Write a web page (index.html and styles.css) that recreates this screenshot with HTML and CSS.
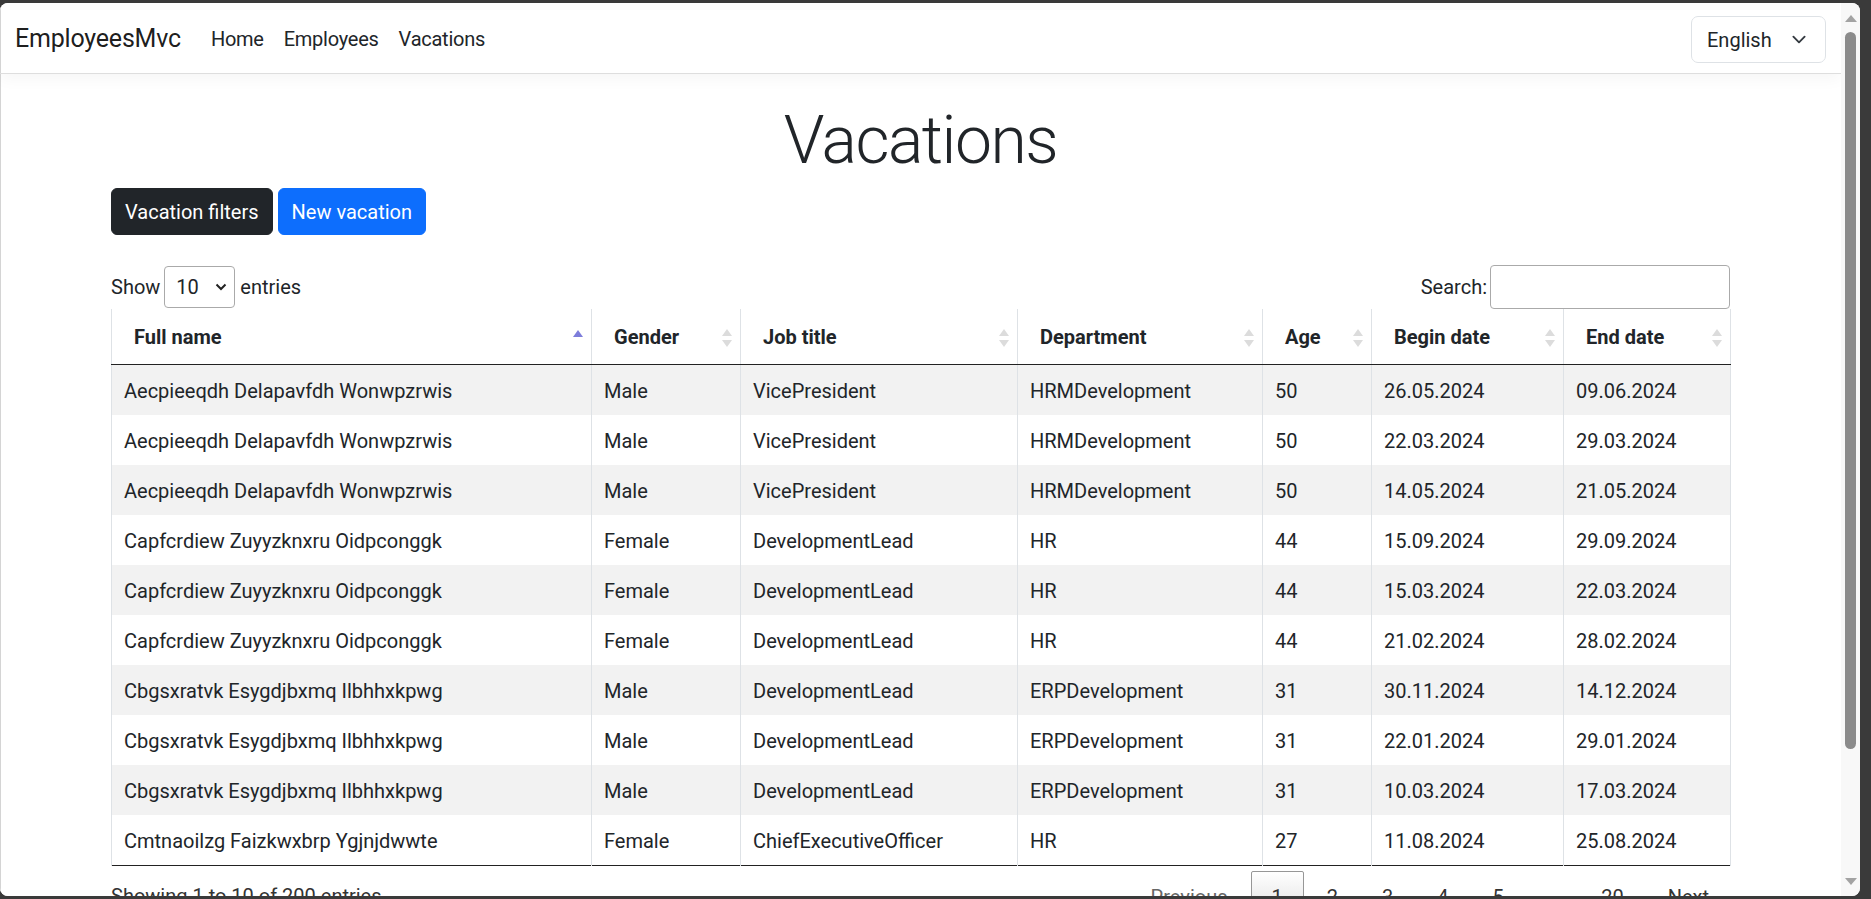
FILE: index.html
```html
<!DOCTYPE html>
<html lang="en">
<head>
<meta charset="utf-8">
<title>Vacations - EmployeesMvc</title>
<link rel="stylesheet" href="styles.css">
</head>
<body>
<div class="window">
  <div class="viewport">
    <header class="navbar">
      <div class="nav-left">
        <a class="brand" href="#">EmployeesMvc</a>
        <nav class="nav-links">
          <a class="nav-link" href="#">Home</a>
          <a class="nav-link" href="#">Employees</a>
          <a class="nav-link" href="#">Vacations</a>
        </nav>
      </div>
      <div class="lang-select">
        <span>English</span>
        <svg class="chev" width="20" height="15" viewBox="0 0 16 16"><path d="M2 5l6 6 6-6" fill="none" stroke="#343a40" stroke-width="2" stroke-linecap="round" stroke-linejoin="round"/></svg>
      </div>
    </header>

    <main class="container">
      <h1 class="title">Vacations</h1>
      <div class="actions">
        <button class="btn btn-dark">Vacation filters</button>
        <button class="btn btn-primary">New vacation</button>
      </div>

      <div class="dt-controls">
        <div class="dt-length">
          <span>Show</span>
          <div class="dt-select">
            <span>10</span>
            <svg width="12" height="8" viewBox="0 0 12 8"><path d="M1.5 1.5l4.5 4.5 4.5-4.5" fill="none" stroke="#222" stroke-width="2"/></svg>
          </div>
          <span>entries</span>
        </div>
        <div class="dt-search">
          <span>Search:</span>
          <div class="dt-input"></div>
        </div>
      </div>

      <table class="dt-table">
        <colgroup>
          <col class="w1"><col class="w2"><col class="w3"><col class="w4"><col class="w5"><col class="w6"><col class="w7">
        </colgroup>
        <thead>
          <tr>
            <th class="sort asc">Full name</th>
            <th class="sort">Gender</th>
            <th class="sort">Job title</th>
            <th class="sort">Department</th>
            <th class="sort">Age</th>
            <th class="sort">Begin date</th>
            <th class="sort">End date</th>
          </tr>
        </thead>
        <tbody>
          <tr><td>Aecpieeqdh Delapavfdh Wonwpzrwis</td><td>Male</td><td>VicePresident</td><td>HRMDevelopment</td><td>50</td><td>26.05.2024</td><td>09.06.2024</td></tr>
          <tr><td>Aecpieeqdh Delapavfdh Wonwpzrwis</td><td>Male</td><td>VicePresident</td><td>HRMDevelopment</td><td>50</td><td>22.03.2024</td><td>29.03.2024</td></tr>
          <tr><td>Aecpieeqdh Delapavfdh Wonwpzrwis</td><td>Male</td><td>VicePresident</td><td>HRMDevelopment</td><td>50</td><td>14.05.2024</td><td>21.05.2024</td></tr>
          <tr><td>Capfcrdiew Zuyyzknxru Oidpconggk</td><td>Female</td><td>DevelopmentLead</td><td>HR</td><td>44</td><td>15.09.2024</td><td>29.09.2024</td></tr>
          <tr><td>Capfcrdiew Zuyyzknxru Oidpconggk</td><td>Female</td><td>DevelopmentLead</td><td>HR</td><td>44</td><td>15.03.2024</td><td>22.03.2024</td></tr>
          <tr><td>Capfcrdiew Zuyyzknxru Oidpconggk</td><td>Female</td><td>DevelopmentLead</td><td>HR</td><td>44</td><td>21.02.2024</td><td>28.02.2024</td></tr>
          <tr><td>Cbgsxratvk Esygdjbxmq Ilbhhxkpwg</td><td>Male</td><td>DevelopmentLead</td><td>ERPDevelopment</td><td>31</td><td>30.11.2024</td><td>14.12.2024</td></tr>
          <tr><td>Cbgsxratvk Esygdjbxmq Ilbhhxkpwg</td><td>Male</td><td>DevelopmentLead</td><td>ERPDevelopment</td><td>31</td><td>22.01.2024</td><td>29.01.2024</td></tr>
          <tr><td>Cbgsxratvk Esygdjbxmq Ilbhhxkpwg</td><td>Male</td><td>DevelopmentLead</td><td>ERPDevelopment</td><td>31</td><td>10.03.2024</td><td>17.03.2024</td></tr>
          <tr><td>Cmtnaoilzg Faizkwxbrp Ygjnjdwwte</td><td>Female</td><td>ChiefExecutiveOfficer</td><td>HR</td><td>27</td><td>11.08.2024</td><td>25.08.2024</td></tr>
        </tbody>
      </table>

      <div class="dt-footer">
        <div class="dt-info">Showing 1 to 10 of 200 entries</div>
        <div class="dt-paging">
          <a class="pg disabled">Previous</a>
          <a class="pg current">1</a>
          <a class="pg">2</a>
          <a class="pg">3</a>
          <a class="pg">4</a>
          <a class="pg">5</a>
          <span class="ellipsis">…</span>
          <a class="pg">20</a>
          <a class="pg">Next</a>
        </div>
      </div>
    </main>
  </div>
  <div class="scrollbar">
    <div class="sb-up"></div>
    <div class="sb-thumb"></div>
    <div class="sb-space"></div>
    <div class="sb-down"></div>
  </div>
</div>
</body>
</html>
```

FILE: styles.css
```css
* { box-sizing: border-box; }

html, body {
  margin: 0;
  height: 899px;
  overflow: hidden;
}

body {
  background: #3a3a3a;
  padding-top: 3px;
  font-family: "Segoe UI", Roboto, "Liberation Sans", sans-serif;
  font-size: 20px;
  line-height: 1.5;
  color: #212529;
}

.window {
  width: 1860px;
  height: 893px;
  background: #fff;
  border-radius: 8px;
  overflow: hidden;
  display: flex;
}

.viewport {
  flex: 1;
  overflow: hidden;
  background: #fff;
  box-shadow: inset 1px 0 0 #d4d4d4;
}

/* Navbar */
.navbar {
  height: 71px;
  display: flex;
  align-items: center;
  justify-content: space-between;
  padding: 0 15px 0 15px;
  border-bottom: 1px solid #dedede;
  box-shadow: 0 5px 15px rgba(0,0,0,.04);
}

.nav-left {
  display: flex;
  align-items: center;
  padding-top: 2px;
}

.brand {
  font-size: 25px;
  letter-spacing: -0.2px;
  color: rgba(0,0,0,.9);
  text-decoration: none;
  margin-right: 20px;
}

.nav-links {
  display: flex;
}

.nav-link {
  color: #212529;
  text-decoration: none;
  padding: 10px 10px;
  letter-spacing: -0.25px;
}

.lang-select {
  width: 135px;
  height: 47px;
  border: 1px solid #dee2e6;
  border-radius: 7px;
  display: flex;
  align-items: center;
  justify-content: space-between;
  padding: 0 16px 0 15px;
  margin-top: 3px;
}

/* Main */
.container {
  width: 1619px;
  margin: 0 auto;
  padding-top: 20px;
}

.title {
  margin: 0;
  text-align: center;
  font-size: 66px;
  font-weight: 300;
  letter-spacing: -1.5px;
  line-height: 94px;
}

.actions {
  display: flex;
  gap: 5px;
  height: 47px;
}

.btn {
  font-family: inherit;
  font-size: 20px;
  line-height: 30px;
  padding: 7px 13px;
  border: 1px solid transparent;
  border-radius: 6px;
  color: #fff;
}

.btn-dark { background: #212529; border-color: #212529; }
.btn-primary { background: #0d6efd; border-color: #0d6efd; }

/* DataTables controls */
.dt-controls {
  margin-top: 30px;
  height: 44px;
  display: flex;
  justify-content: space-between;
  align-items: center;
}

.dt-length, .dt-search {
  display: flex;
  align-items: center;
}

.dt-select {
  width: 71px;
  height: 42px;
  margin: 0 5px 0 4px;
  border: 1px solid #aaa;
  border-radius: 4px;
  display: flex;
  align-items: center;
  justify-content: space-between;
  padding: 0 7px 0 11px;
}

.dt-input {
  width: 240px;
  height: 44px;
  margin-left: 3px;
  border: 1px solid #aaa;
  border-radius: 4px;
}

/* Table */
.dt-table {
  width: 1619px;
  table-layout: fixed;
  border-collapse: collapse;
  border-bottom: 1px solid #222;
}

.w1 { width: 480px; }
.w2 { width: 149px; }
.w3 { width: 277px; }
.w4 { width: 245px; }
.w5 { width: 109px; }
.w6 { width: 192px; }
.w7 { width: 167px; }

.dt-table th,
.dt-table td {
  border-left: 1px solid #dee2e6;
  border-right: 1px solid #dee2e6;
  text-align: left;
  white-space: nowrap;
  overflow: hidden;
}

.dt-table th {
  position: relative;
  font-weight: 700;
  padding: 13px 22px 12px 22px;
  line-height: 30px;
  border-bottom: 1px solid #222;
}

.dt-table td {
  padding: 11px 12px 9px;
  line-height: 30px;
}

.dt-table tbody tr:nth-child(odd) td {
  background: #f2f2f2;
}

.sort::before,
.sort::after {
  content: "";
  position: absolute;
  right: 8px;
  width: 0;
  height: 0;
  border-left: 5px solid transparent;
  border-right: 5px solid transparent;
}

.sort::before {
  top: 20px;
  border-bottom: 7px solid #dcdcdc;
}

.sort::after {
  top: 31px;
  border-top: 7px solid #dcdcdc;
}

.sort.asc::before {
  top: 21px;
  border-bottom-color: #7d7ddb;
}

.sort.asc::after {
  display: none;
}

/* Footer */
.dt-footer {
  display: flex;
  justify-content: space-between;
  align-items: flex-start;
}

.dt-info {
  padding-top: 15px;
  color: #333;
}

.dt-paging {
  padding-top: 5px;
  display: flex;
  color: #333;
}

.pg {
  min-width: 30px;
  padding: 10px 20px;
  margin-left: 2px;
  border: 1px solid transparent;
  border-radius: 2px;
  text-align: center;
  color: #333;
}

.pg.disabled { color: #666; }

.pg.current {
  border-color: #979797;
  background: linear-gradient(to bottom, #fff 0%, #dcdcdc 100%);
}

.ellipsis {
  padding: 10px 20px;
}

/* Fake scrollbar */
.scrollbar {
  width: 19px;
  background: #f8f8f8;
  display: flex;
  flex-direction: column;
  align-items: center;
}

.sb-up {
  margin-top: 12px;
  width: 0;
  height: 0;
  border-left: 6px solid transparent;
  border-right: 6px solid transparent;
  border-bottom: 7px solid #a3a3a3;
}

.sb-thumb {
  margin-top: 10px;
  width: 11px;
  height: 717px;
  background: #8b8b8b;
  border-radius: 6px;
}

.sb-space { flex: 1; }

.sb-down {
  margin-bottom: 11px;
  width: 0;
  height: 0;
  border-left: 6px solid transparent;
  border-right: 6px solid transparent;
  border-top: 7px solid #a3a3a3;
}
```
